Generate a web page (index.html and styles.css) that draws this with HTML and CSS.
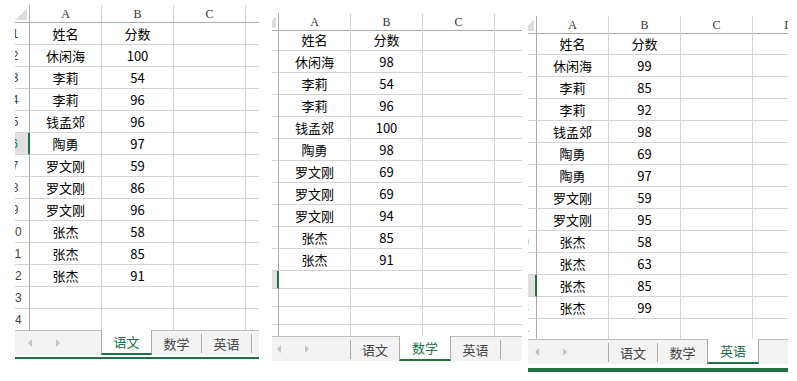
FILE: index.html
```html
<!DOCTYPE html>
<html>
<head>
  <meta charset="utf-8">
  <title>成绩表</title>
  <link rel="stylesheet" href="styles.css">
</head>
<body>
  <!-- 语文 -->
  <div class="panel p1">
    <div class="sheet">
      <div class="row head"><div class="corner"><span></span></div><div>A</div><div>B</div><div>C</div><div>D</div></div>
      <div class="row"><div class="rh">1</div><div>姓名</div><div>分数</div><div></div><div></div></div>
      <div class="row"><div class="rh">2</div><div>休闲海</div><div>100</div><div></div><div></div></div>
      <div class="row"><div class="rh">3</div><div>李莉</div><div>54</div><div></div><div></div></div>
      <div class="row"><div class="rh">4</div><div>李莉</div><div>96</div><div></div><div></div></div>
      <div class="row"><div class="rh">5</div><div>钱孟郊</div><div>96</div><div></div><div></div></div>
      <div class="row active"><div class="rh">6</div><div>陶勇</div><div>97</div><div></div><div></div></div>
      <div class="row"><div class="rh">7</div><div>罗文刚</div><div>59</div><div></div><div></div></div>
      <div class="row"><div class="rh">8</div><div>罗文刚</div><div>86</div><div></div><div></div></div>
      <div class="row"><div class="rh">9</div><div>罗文刚</div><div>96</div><div></div><div></div></div>
      <div class="row"><div class="rh">10</div><div>张杰</div><div>58</div><div></div><div></div></div>
      <div class="row"><div class="rh">11</div><div>张杰</div><div>85</div><div></div><div></div></div>
      <div class="row"><div class="rh">12</div><div>张杰</div><div>91</div><div></div><div></div></div>
      <div class="row"><div class="rh">13</div><div></div><div></div><div></div><div></div></div>
      <div class="row"><div class="rh">14</div><div></div><div></div><div></div><div></div></div>
    </div>
    <div class="tabs">
      <div class="nav"><span class="arrow-l"></span><span class="arrow-r"></span></div>
      <div class="tab on">语文</div>
      <div class="tab">数学</div>
      <div class="tab">英语</div>
    </div>
    <div class="status"></div>
  </div>

  <!-- 数学 -->
  <div class="panel p2">
    <div class="sheet">
      <div class="row head"><div class="corner"><span></span></div><div>A</div><div>B</div><div>C</div><div>D</div></div>
      <div class="row"><div class="rh">1</div><div>姓名</div><div>分数</div><div></div><div></div></div>
      <div class="row"><div class="rh">2</div><div>休闲海</div><div>98</div><div></div><div></div></div>
      <div class="row"><div class="rh">3</div><div>李莉</div><div>54</div><div></div><div></div></div>
      <div class="row"><div class="rh">4</div><div>李莉</div><div>96</div><div></div><div></div></div>
      <div class="row"><div class="rh">5</div><div>钱孟郊</div><div>100</div><div></div><div></div></div>
      <div class="row"><div class="rh">6</div><div>陶勇</div><div>98</div><div></div><div></div></div>
      <div class="row"><div class="rh">7</div><div>罗文刚</div><div>69</div><div></div><div></div></div>
      <div class="row"><div class="rh">8</div><div>罗文刚</div><div>69</div><div></div><div></div></div>
      <div class="row"><div class="rh">9</div><div>罗文刚</div><div>94</div><div></div><div></div></div>
      <div class="row"><div class="rh">10</div><div>张杰</div><div>85</div><div></div><div></div></div>
      <div class="row"><div class="rh">11</div><div>张杰</div><div>91</div><div></div><div></div></div>
      <div class="row short active"><div class="rh">12</div><div></div><div></div><div></div><div></div></div>
      <div class="row short"><div class="rh">13</div><div></div><div></div><div></div><div></div></div>
      <div class="row short"><div class="rh">14</div><div></div><div></div><div></div><div></div></div>
      <div class="row short"><div class="rh">15</div><div></div><div></div><div></div><div></div></div>
    </div>
    <div class="tabs">
      <div class="nav"><span class="arrow-l"></span><span class="arrow-r"></span></div>
      <div class="tab first">语文</div>
      <div class="tab on">数学</div>
      <div class="tab">英语</div>
    </div>
  </div>

  <!-- 英语 -->
  <div class="panel p3">
    <div class="sheet">
      <div class="row head"><div class="corner"><span></span></div><div>A</div><div>B</div><div>C</div><div>D</div></div>
      <div class="row"><div class="rh">1</div><div>姓名</div><div>分数</div><div></div><div></div></div>
      <div class="row"><div class="rh">2</div><div>休闲海</div><div>99</div><div></div><div></div></div>
      <div class="row"><div class="rh">3</div><div>李莉</div><div>85</div><div></div><div></div></div>
      <div class="row"><div class="rh">4</div><div>李莉</div><div>92</div><div></div><div></div></div>
      <div class="row"><div class="rh">5</div><div>钱孟郊</div><div>98</div><div></div><div></div></div>
      <div class="row"><div class="rh">6</div><div>陶勇</div><div>69</div><div></div><div></div></div>
      <div class="row"><div class="rh">7</div><div>陶勇</div><div>97</div><div></div><div></div></div>
      <div class="row"><div class="rh">8</div><div>罗文刚</div><div>59</div><div></div><div></div></div>
      <div class="row"><div class="rh">9</div><div>罗文刚</div><div>95</div><div></div><div></div></div>
      <div class="row"><div class="rh">10</div><div>张杰</div><div>58</div><div></div><div></div></div>
      <div class="row"><div class="rh">11</div><div>张杰</div><div>63</div><div></div><div></div></div>
      <div class="row active"><div class="rh">12</div><div>张杰</div><div>85</div><div></div><div></div></div>
      <div class="row"><div class="rh">13</div><div>张杰</div><div>99</div><div></div><div></div></div>
      <div class="row"><div class="rh">14</div><div></div><div></div><div></div><div></div></div>
    </div>
    <div class="tabs">
      <div class="nav"><span class="arrow-l"></span><span class="arrow-r"></span></div>
      <div class="tab first">语文</div>
      <div class="tab">数学</div>
      <div class="tab on">英语</div>
    </div>
    <div class="status"></div>
  </div>
</body>
</html>
```

FILE: styles.css
```css
:root {
  --grid: #d4d4d4;
  --head-line: #ababab;
  --green: #217346;
  --bar-bg: #f3f3f3;
}

body {
  margin: 0;
  width: 797px;
  height: 381px;
  overflow: hidden;
  background: #fff;
  display: flex;
  align-items: flex-start;
  font-family: "Noto Sans CJK SC", sans-serif;
  color: #000;
}

/* each sheet window is clipped on the left, --cut hides part of the row numbers */
.panel {
  overflow: hidden;
  display: flex;
  flex-direction: column;
  align-items: flex-start;
}

.p1 { --cut: 14px; --head: 18px; --sheet-h: 325px; margin: 5px 0 0 15px; width: 244px; }
.p2 { --cut: 22px; --head: 16px; --sheet-h: 323px; margin: 13px 0 0 13px; width: 250px; }
.p3 { --cut: 20px; --head: 17px; --sheet-h: 323px; margin: 16px 0 0 6px; width: 260px; }

.sheet {
  margin-left: calc(-1 * var(--cut));
  height: var(--sheet-h);
  width: max-content;
  overflow: hidden;
}

.row {
  display: grid;
  grid-template-columns: 29px repeat(4, 72px);
  height: 22px;
}

.row.short { height: 18px; }

.row > div {
  box-sizing: border-box;
  border-right: 1px solid var(--grid);
  border-bottom: 1px solid var(--grid);
  display: flex;
  align-items: center;
  justify-content: center;
  font-size: 13px;
  white-space: nowrap;
}

.row > .rh {
  border-right-color: var(--head-line);
  font-family: "Liberation Sans", sans-serif;
  font-size: 12px;
  color: #444;
}

.row.active > .rh {
  background: #e1e1e1;
  border-right: 2px solid var(--green);
  color: var(--green);
}

/* column letters */
.row.head { height: var(--head); }

.row.head > div {
  border-bottom-color: var(--head-line);
  font-family: "Liberation Serif", serif;
  font-size: 12px;
  color: #333;
  padding-top: 2px;
}

.row.head > .corner {
  border-right-color: var(--head-line);
  align-items: flex-end;
  justify-content: flex-end;
  padding: 0 2px 2px 0;
}

.corner span {
  width: 11px;
  height: 11px;
  background: linear-gradient(to bottom right, transparent 50%, #dcdcdc 50%);
}

/* sheet tabs */
.tabs {
  box-sizing: border-box;
  width: 100%;
  height: 25px;
  border-top: 1px solid #bdbdbd;
  background: var(--bar-bg);
  display: flex;
  align-items: flex-start;
}

.nav {
  box-sizing: border-box;
  width: calc(100px - var(--cut));
  height: 24px;
  padding-left: calc(27px - var(--cut));
  display: flex;
  align-items: center;
  gap: 24px;
}

.arrow-l {
  border-top: 4px solid transparent;
  border-bottom: 4px solid transparent;
  border-right: 4px solid #c4c4c4;
}

.arrow-r {
  border-top: 4px solid transparent;
  border-bottom: 4px solid transparent;
  border-left: 4px solid #c4c4c4;
}

.tab {
  box-sizing: border-box;
  width: 50px;
  height: 19px;
  margin-top: 3px;
  border-right: 1px solid var(--head-line);
  display: flex;
  align-items: center;
  justify-content: center;
  font-size: 13px;
  color: #444;
}

.tab.first { border-left: 1px solid var(--head-line); }

.tab.on {
  width: 51px;
  height: 25px;
  margin-top: -1px;
  background: #fff;
  border-left: 1px solid var(--head-line);
  border-bottom: 2px solid var(--green);
  color: var(--green);
}

.tab + .tab.on {
  width: 52px;
  margin-left: -1px;
}

.status {
  width: 100%;
  height: 2px;
  margin-top: 2px;
  background: var(--green);
}

.p3 .status {
  height: 4px;
  margin-top: 4px;
}
```
